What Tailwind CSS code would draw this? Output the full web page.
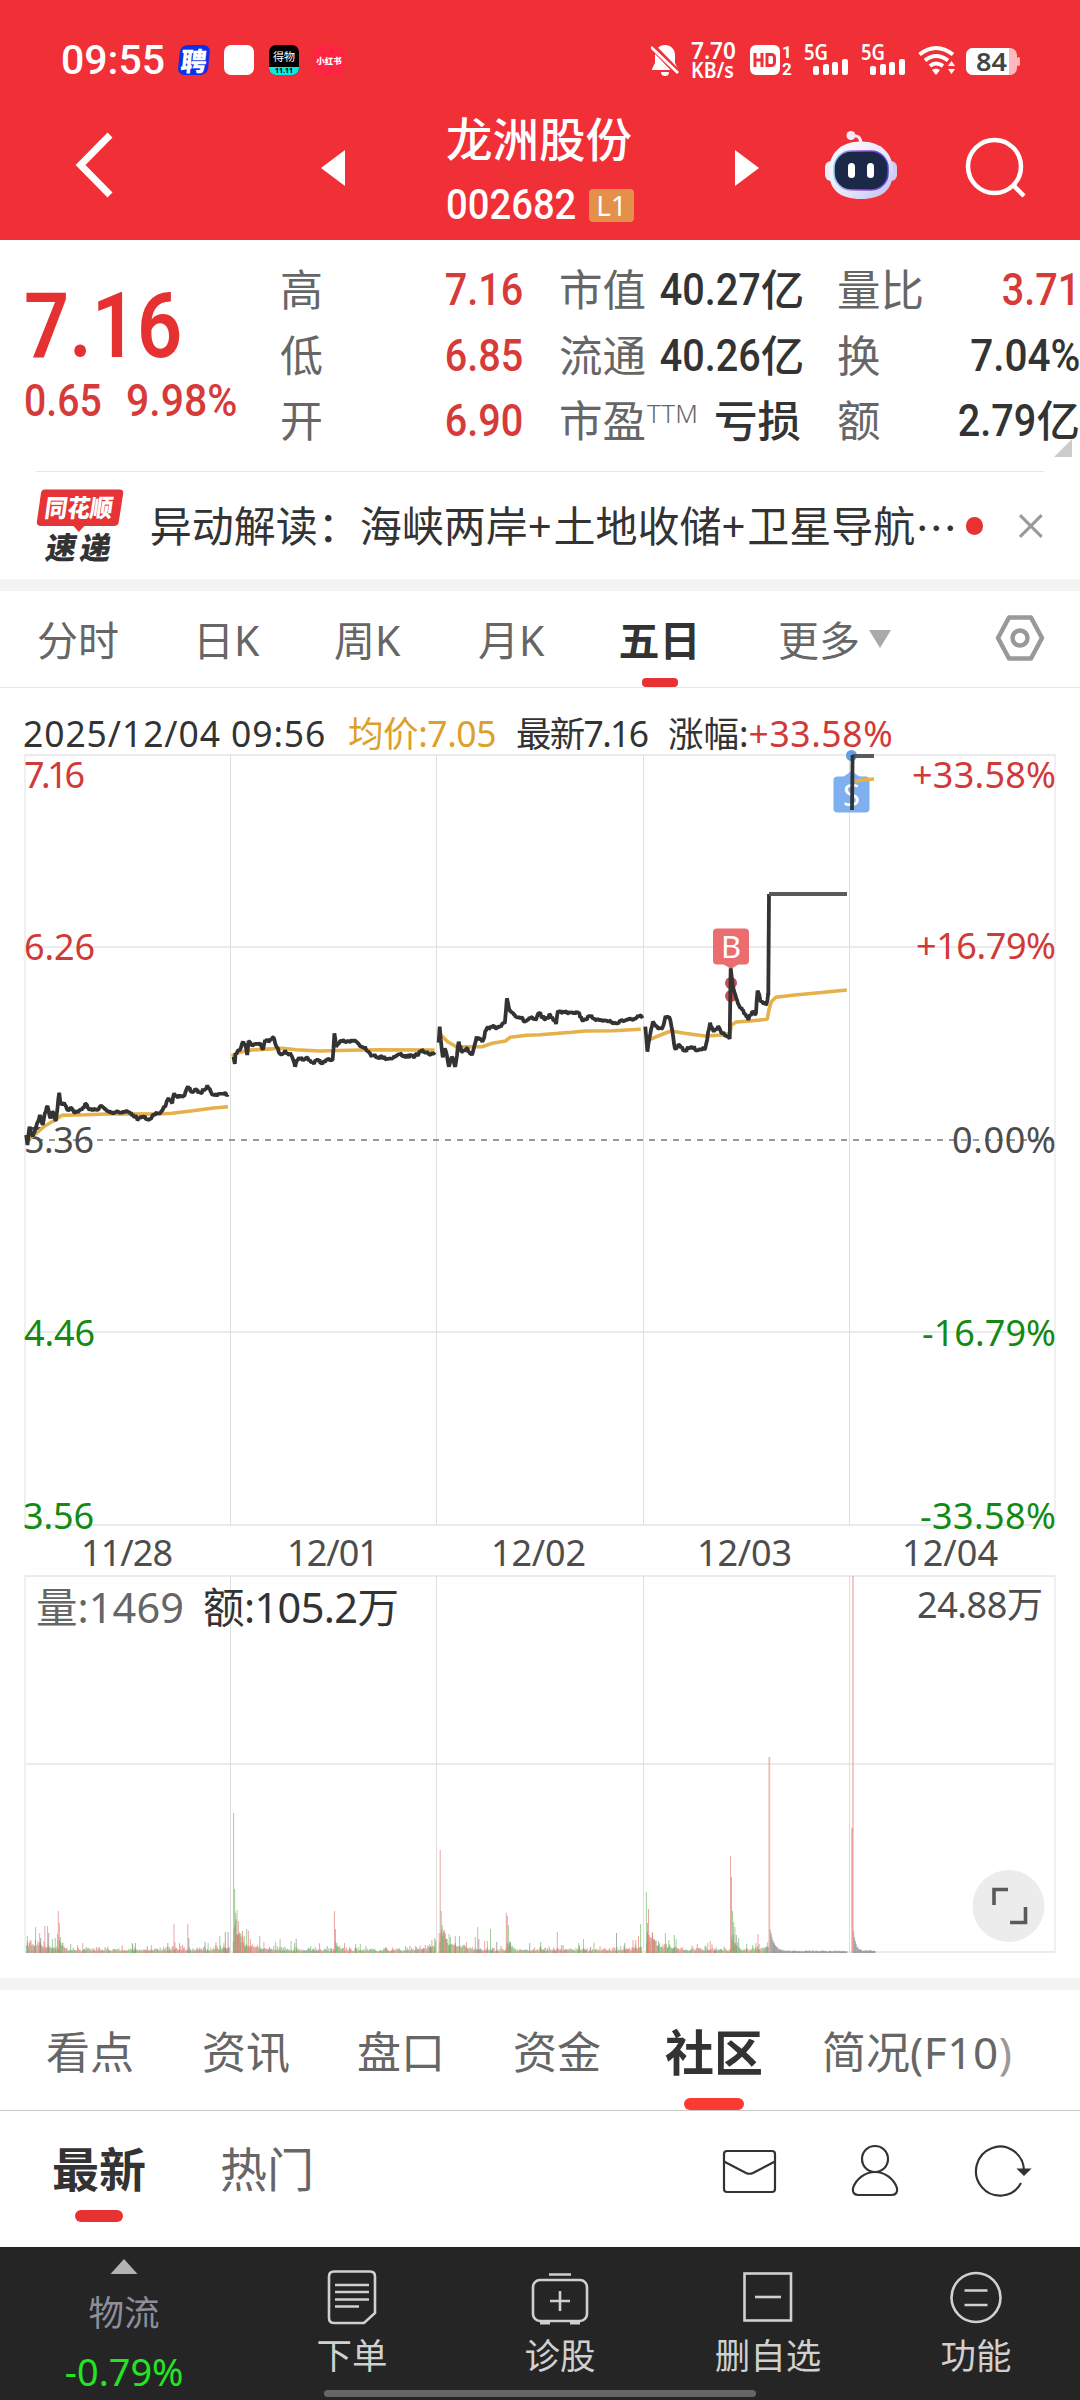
<!DOCTYPE html>
<html lang="zh-CN">
<head>
<meta charset="utf-8">
<title>龙洲股份 002682</title>
<script src="https://cdn.jsdelivr.net/npm/@tailwindcss/browser@4"></script>
</head>
<body class="w-[1080px] h-[2400px] overflow-hidden bg-white text-[#333] font-['Noto_Sans','Noto_Sans_CJK_SC',sans-serif]">
<div class="flex flex-col w-[1080px] h-[2400px] overflow-hidden whitespace-nowrap">

  <!-- Header -->
  <header class="h-[240px] bg-[#f12f37] text-white flex flex-col shrink-0">
    <!-- status bar -->
    <div class="h-[80px] pt-[40px] flex items-center shrink-0">
      <div class="ml-[61px] w-[118px] text-[41px] leading-[42px] font-medium font-['Roboto',sans-serif]">09:55</div>
      <div class="flex gap-[15px] w-[472px]">
        <div class="size-[30px] rounded-[7px] bg-[#0d2fe8] flex items-center justify-center text-[26px] leading-[30px] font-black -skew-x-6 font-['Noto_Sans_CJK_SC',sans-serif]">聘</div>
        <div class="size-[30px] rounded-[7px] bg-white"></div>
        <div class="size-[30px] rounded-[7px] bg-black overflow-hidden flex flex-col items-center">
          <div class="h-[22px] text-[11px] leading-[23px]">得物</div>
          <div class="h-[8px] w-full bg-[#0fe6e6] text-black text-[7px] leading-[8px] text-center font-bold">11.11</div>
        </div>
        <div class="size-[30px] rounded-[7px] bg-[#ff2442] flex items-center justify-center text-[8.5px] font-black font-['Noto_Sans_CJK_SC',sans-serif]">小红书</div>
      </div>
      <svg class="w-[28px] h-[32px]" viewBox="0 0 28 32" fill="white">
        <path d="M14 1c6 0 10 4.500 10 10v8l3 6v1H1v-1l3-6v-8C4 5.500 8 1 14 1z"/><path d="M10 28h8a4 4 0 0 1-8 0z"/>
        <path d="M-1 0L27 29" stroke="#f12f37" stroke-width="6.500"/><path d="M0 3L27 29" stroke="white" stroke-width="2.800"/>
      </svg>
      <div class="ml-[12px] w-[59px] flex flex-col font-semibold leading-[20px] text-[23px] font-['Noto_Sans',sans-serif]">
        <span class="origin-left scale-x-[.98]">7.70</span><span class="text-[21px] origin-left scale-x-[.93]">KB/s</span>
      </div>
      <svg class="w-[44px] h-[32px] overflow-visible font-['Roboto']" viewBox="0 0 44 32">
        <rect x="0" y="1" width="30" height="30" rx="6" fill="white"/>
        <path d="M5 9v14M12 9v14M5 16h7M17 10.500h4.500a3 3 0 0 1 3 3v5a3 3 0 0 1-3 3H17z" fill="none" stroke="#f12f37" stroke-width="3"/>
        <text x="32" y="13.500" font-size="17" font-weight="700" fill="white">1</text>
        <text x="32" y="31" font-size="17" font-weight="700" fill="white">2</text>
      </svg>
      <svg class="ml-[10px] w-[114px] h-[32px] overflow-visible" viewBox="0 0 114 32" fill="white">
        <g id="sig"><text x="0" y="16" font-size="21" font-weight="600" textLength="24" lengthAdjust="spacingAndGlyphs">5G</text>
        <rect x="9" y="22" width="6" height="9" rx="2"/><rect x="19" y="20" width="6" height="11" rx="2"/><rect x="28" y="18" width="6" height="13" rx="2"/><rect x="38" y="15" width="6" height="16" rx="2"/></g>
        <use href="#sig" x="57"/>
      </svg>
      <svg class="w-[38px] h-[32px]" viewBox="0 0 38 32" fill="none" stroke="white" stroke-width="4">
        <path d="M1.500 10.500Q18 -2.500 35 10.500M7 16.500Q18 7.500 30 16.500M12 22Q18 17 25 22"/>
        <path d="M14 26q4-3 8 0l-4 5z" fill="white" stroke="none"/><path d="M30 22l3.500-5 3.500 5zM30 25l3.500 5 3.500-5z" fill="white" stroke="none"/>
      </svg>
      <svg class="ml-[10px] w-[56px] h-[32px] overflow-visible font-['Noto_Sans']" viewBox="0 0 56 32">
        <rect x="0" y="4" width="51" height="27" rx="7" fill="#ffb8bb"/><path d="M7 4H43V31H7a7 7 0 0 1-7-7V11a7 7 0 0 1 7-7z" fill="white"/>
        <rect x="51" y="13" width="3" height="9" rx="1.500" fill="#ffb8bb"/>
        <text x="10" y="27" font-size="25" font-weight="600" fill="#444" textLength="31" lengthAdjust="spacingAndGlyphs">84</text>
      </svg>
    </div>
    <!-- title bar -->
    <div class="h-[160px] flex items-start">
      <svg class="ml-[72px] mt-[49px] w-[44px] h-[72px]" viewBox="0 0 44 72" fill="none" stroke="white" stroke-width="7"><path d="M38 6L8.500 36L38 66"/></svg>
      <svg class="ml-[205px] mt-[70px] w-[24px] h-[36px]" viewBox="0 0 24 36" fill="white"><path d="M24 0V36L0 18z"/></svg>
      <div class="ml-[101px] w-[193px] flex flex-col">
        <div class="mt-[29px] h-[60px] text-[46.500px] leading-[60px] font-medium">龙洲股份</div>
        <div class="mt-[15px] flex items-center h-[42px]">
          <div class="w-[143px] text-[42px] leading-[42px] font-medium font-['Roboto',sans-serif] origin-left scale-x-[.91]">002682</div>
          <div class="w-[45px] h-[33px] rounded-[4px] bg-[#e48f4a] text-[28px] leading-[33px] text-center">L1</div>
        </div>
      </div>
      <svg class="ml-[96px] mt-[70px] w-[24px] h-[36px]" viewBox="0 0 24 36" fill="white"><path d="M0 0V36L24 18z"/></svg>
      <svg class="ml-[65px] mt-[50px] w-[74px] h-[70px]" viewBox="0 0 74 70">
        <defs>
          <linearGradient id="hd" x1="0" y1="0" x2="1" y2="1"><stop offset="0" stop-color="#fff"/><stop offset=".6" stop-color="#e6e4fb"/><stop offset="1" stop-color="#b9bdf0"/></linearGradient>
          <linearGradient id="rim" x1="0" y1="0" x2="1" y2="0"><stop offset="0" stop-color="#8fd3f2"/><stop offset=".5" stop-color="#a34be0"/><stop offset="1" stop-color="#4b41d8"/></linearGradient>
        </defs>
        <path d="M27 6Q37 4 37 14" fill="none" stroke="#f3e6f7" stroke-width="3"/><circle cx="27" cy="5.500" r="4.500" fill="#f6e9f7"/>
        <rect x="1" y="31" width="12" height="20" rx="6" fill="#e9ecfb"/><rect x="61" y="31" width="12" height="20" rx="6" fill="#cfcdf5"/>
        <path d="M37 11.500C58 11.500 69 24 69 41C69 60 58 69 37 69S5 60 5 41C5 24 16 11.500 37 11.500z" fill="url(#hd)"/>
        <rect x="10" y="21" width="54" height="39" rx="17" fill="#1b2848" stroke="url(#rim)" stroke-width="1.500"/>
        <rect x="24" y="33" width="7" height="15" rx="3.500" fill="white"/><rect x="43" y="33" width="7" height="15" rx="3.500" fill="white"/>
      </svg>
      <svg class="ml-[66px] mt-[55px] w-[64px] h-[66px]" viewBox="0 0 64 66" fill="none" stroke="white" stroke-width="4.500"><circle cx="30.500" cy="31.500" r="26.500"/><path d="M49 50L60 61"/></svg>
    </div>
  </header>

  <!-- Quote -->
  <section class="h-[231px] flex shrink-0 pt-[17px] relative">
    <div class="w-[280px] pl-[24px] text-[#e63133] font-['Roboto',sans-serif]">
      <div class="mt-[23px] h-[92px] leading-[92px] text-[91px] font-semibold origin-left scale-x-[.87]">7.16</div>
      <div class="mt-[4px] h-[48px] flex text-[#d63a39] text-[45px] leading-[50px] font-medium">
        <div class="w-[102px] origin-left scale-x-[.87]">0.65</div><div class="origin-left scale-x-[.91]">9.98%</div>
      </div>
    </div>
    <div class="w-[243px] text-[43px] leading-[65.500px] text-[#666]">
      <div class="flex justify-between"><span>高</span><b class="font-medium text-[45px] text-[#d63a39] font-['Roboto',sans-serif] origin-right scale-x-[.88]">7.16</b></div>
      <div class="flex justify-between"><span>低</span><b class="font-medium text-[45px] text-[#d63a39] font-['Roboto',sans-serif] origin-right scale-x-[.88]">6.85</b></div>
      <div class="flex justify-between"><span>开</span><b class="font-medium text-[45px] text-[#d63a39] font-['Roboto',sans-serif] origin-right scale-x-[.88]">6.90</b></div>
    </div>
    <div class="ml-[36px] w-[242px] text-[43.500px] leading-[65.500px] text-[#666]">
      <div class="flex justify-between"><span>市值</span><b class="flex font-medium text-[#333]"><i class="not-italic text-[45px] font-['Roboto',sans-serif] origin-right scale-x-[.88]">40.27</i>亿</b></div>
      <div class="flex justify-between"><span>流通</span><b class="flex font-medium text-[#333]"><i class="not-italic text-[45px] font-['Roboto',sans-serif] origin-right scale-x-[.88]">40.26</i>亿</b></div>
      <div class="flex justify-between"><span class="flex">市盈<i class="not-italic text-[26px] leading-[50px] ml-px font-light">TTM</i></span><b class="font-medium text-[#333]">亏损</b></div>
    </div>
    <div class="ml-[36px] w-[243px] shrink-0 text-[43.500px] leading-[65.500px] text-[#666]">
      <div class="flex justify-between"><span>量比</span><b class="font-medium text-[45px] text-[#d63a39] font-['Roboto',sans-serif] origin-right scale-x-[.88]">3.71</b></div>
      <div class="flex justify-between"><span>换</span><b class="font-medium text-[45px] text-[#333] font-['Roboto',sans-serif] origin-right scale-x-[.9]">7.04%</b></div>
      <div class="flex justify-between"><span>额</span><b class="flex font-medium text-[#333]"><i class="not-italic text-[45px] font-['Roboto',sans-serif] origin-right scale-x-[.88]">2.79</i>亿</b></div>
    </div>
    <svg class="absolute right-[8px] top-[199px] w-[18px] h-[18px]" viewBox="0 0 18 18" fill="#ccc"><path d="M18 0V18H0z"/></svg>
  </section>

  <!-- News strip -->
  <section class="h-[108px] mx-[36px] border-t border-[#e8e8e8] flex items-center shrink-0">
    <svg class="w-[92px] h-[76px] font-['Noto_Sans_CJK_SC']" viewBox="0 0 92 76">
      <path d="M9 1H85q4 0 3.500 4L84 34q-.5 4-5 4H49l-5.500 6L38 38H5q-5 0-4-5L5 5q.5-4 4-4z" fill="#e63336"/>
      <text x="7" y="29" transform="skewX(-8) translate(5 0)" font-size="25" font-weight="900" fill="white" textLength="69" lengthAdjust="spacingAndGlyphs">同花顺</text>
      <text x="9" y="71" transform="skewX(-10) translate(12 0)" font-size="31" font-weight="900" fill="#333" textLength="66">速递</text>
    </svg>
    <div class="ml-[23px] w-[808px] text-[42px] leading-[60px] flex"><span>异动解读：海峡两岸</span><span class="w-[28px]">+</span><span>土地收储</span><span class="w-[28px]">+</span><span>卫星导航</span><span class="w-[46px] font-['Noto_Sans_CJK_SC']">⋯</span></div>
    <div class="ml-[8px] size-[18px] rounded-full bg-[#e83133]"></div>
    <svg class="ml-[35px] w-[26px] h-[26px]" viewBox="0 0 26 26" stroke="#999" stroke-width="3"><path d="M2 2L24 24M24 2L2 24"/></svg>
  </section>
  <div class="h-[12px] bg-[#f4f4f4] shrink-0"></div>

  <!-- Period tabs -->
  <nav class="h-[97px] border-b border-[#e6e6e6] flex shrink-0 text-[41px] leading-[99px] text-[#666]">
    <div class="ml-[37px] w-[156px]">分时</div>
    <div class="w-[141px]">日K</div>
    <div class="w-[144px]">周K</div>
    <div class="w-[141px]">月K</div>
    <div class="w-[81px] text-[#333] font-semibold flex flex-col items-center">
      <div class="h-[87px]">五日</div><div class="w-[36px] h-[9px] rounded-[4px] bg-[#e83133]"></div>
    </div>
    <div class="ml-[78px] w-[90px]">更多</div>
    <svg class="mt-[39px] w-[24px] h-[19px]" viewBox="0 0 24 19" fill="#aaa"><path d="M1 0H23L12 18z"/></svg>
    <svg class="ml-[103px] mt-[22px] w-[50px] h-[50px]" viewBox="0 0 50 50" fill="none" stroke="#999" stroke-width="4.500" stroke-linejoin="round"><path d="M14 4.500H36L47 25L36 45.500H14L3 25z"/><circle cx="25" cy="25" r="7.500"/></svg>
  </nav>

  <!-- Chart legend -->
  <div class="h-[64px] shrink-0 pl-[23px] pt-[13px] flex text-[35.500px] leading-[64px]">
    <div class="w-[325px] tracking-[.9px]">2025/12/04 09:56</div>
    <div class="w-[168px] text-[#dda029] tracking-[-.4px]">均价:7.05</div>
    <div class="w-[152px] tracking-[-1.700px]">最新7.16</div>
    <div>涨幅:<span class="text-[#d03a38] tracking-[.6px]">+33.58%</span></div>
  </div>

  <!-- Charts: coordinates start at page y = 740 -->
  <svg id="chart" class="shrink-0 w-[1080px] h-[1238px] -mt-[12px]" viewBox="0 740 1080 1238">
    <g stroke="#ebebeb" stroke-width="2">
      <path d="M25 755H1055M25 947H1055M25 1332H1055M25 1525H1055M25 1576H1055M25 1764H1055M25 1952H1055"/>
      <path d="M25 754V1526M1055 754V1526M25 1575V1953M1055 1575V1953" stroke-width="1.500"/>
    </g>
    <path d="M230.500 755V1525M436.500 755V1525M643.500 755V1525M849.500 755V1525M230.500 1576V1952M436.500 1576V1952M643.500 1576V1952M849.500 1576V1952" stroke="#dedede"/>
    <path d="M25 1140H1055" stroke="#999" stroke-width="2" stroke-dasharray="6 6"/>
    <g id="volume"></g>
    <g font-size="36" fill="#d03a38">
      <text x="24" y="788" textLength="61">7.16</text><text x="24" y="960" textLength="71">6.26</text>
      <text x="24" y="1153" fill="#4d4d4d" textLength="70">5.36</text>
      <text x="24" y="1346" fill="#138a13" textLength="71">4.46</text><text x="23" y="1528.500" fill="#138a13" textLength="71">3.56</text>
      <text x="912" y="788" textLength="144">+33.58%</text><text x="916" y="959" textLength="140">+16.79%</text>
      <text x="952" y="1153" fill="#4d4d4d" textLength="104">0.00%</text>
      <text x="922" y="1346" fill="#138a13" textLength="134">-16.79%</text><text x="920" y="1528.500" fill="#138a13" textLength="136">-33.58%</text>
    </g>
    <g font-size="36" fill="#4d4d4d">
      <text x="81" y="1566" textLength="92">11/28</text><text x="287" y="1566" textLength="92">12/01</text><text x="491" y="1566" textLength="95">12/02</text><text x="697" y="1566" textLength="95">12/03</text><text x="902" y="1566" textLength="96">12/04</text>
      <text x="917" y="1617.500" textLength="126">24.88万</text>
      <text x="36" y="1623" font-size="41.500" fill="#666" textLength="148">量:1469</text><text x="203" y="1623" font-size="41.500" fill="#333" textLength="196">额:105.2万</text>
    </g>
    <g fill="#7eb0f0"><rect x="833.500" y="776.500" width="36" height="36" rx="4"/><path d="M843 777l8.500-6 8.500 6z"/><circle cx="851.500" cy="755.500" r="5.500" fill="#5c9fe8"/></g>
    <text x="851.500" y="806" font-size="31" fill="white" text-anchor="middle">S</text>
    <g fill="#ec6d6f"><rect x="713" y="928.500" width="36" height="36" rx="4"/><path d="M723 964l8 5 8-5z"/><circle cx="731" cy="983" r="6" fill="#c65058"/><circle cx="731" cy="996" r="6" fill="#c65058"/></g>
    <text x="731" y="958" font-size="31" fill="white" text-anchor="middle">B</text>
    <g id="price" fill="none" stroke-linejoin="bevel"></g>
    <circle cx="1008.500" cy="1906" r="36" fill="#ececec"/>
    <path d="M1008 1889.500H994V1905M1010 1922.500H1025.500V1907" fill="none" stroke="#5a5a5a" stroke-width="3.600"/>
  </svg>
  <div class="h-[12px] bg-[#f4f4f4] shrink-0"></div>

  <!-- Section tabs -->
  <nav class="h-[121px] border-b border-[#c8c8c8] flex shrink-0 text-[44px] leading-[124px] text-[#666]">
    <div class="ml-[46px] w-[156px]">看点</div>
    <div class="w-[155px]">资讯</div>
    <div class="w-[156px]">盘口</div>
    <div class="w-[152px]">资金</div>
    <div class="w-[98px] text-[49px] font-semibold text-[#333] flex flex-col items-center">
      <div class="h-[108px]">社区</div><div class="w-[60px] h-[12px] rounded-[6px] bg-[#fa3b33]"></div>
    </div>
    <div class="ml-[59px]">简况<span class="tracking-[.6px]">(F10<span class="text-[#999]">)</span></span></div>
  </nav>

  <!-- Sort row -->
  <section class="h-[136px] flex shrink-0 text-[47px] leading-[117px] text-[#666]">
    <div class="ml-[52px] w-[94px] flex flex-col items-center">
      <div class="h-[99px] font-bold text-[#333]">最新</div><div class="w-[48px] h-[12px] rounded-[6px] bg-[#e83133]"></div>
    </div>
    <div class="ml-[74px] w-[500px]">热门</div>
    <svg class="mt-[36px] w-[58px] h-[50px]" viewBox="0 0 58 50" fill="none" stroke="#333" stroke-width="2.200"><rect x="4" y="4" width="51" height="41" rx="3"/><path d="M4 14.500L26 26q3.500 1.500 7 0L55 14.500"/></svg>
    <svg class="ml-[71px] mt-[32px] w-[52px] h-[56px]" viewBox="0 0 52 56" fill="none" stroke="#333" stroke-width="2.200"><ellipse cx="26" cy="16" rx="13" ry="13"/><path d="M26 29C36 29 45 36 48 45Q49 51.500 43 52H9Q3 51.500 4 45C7 36 16 29 26 29z"/></svg>
    <svg class="ml-[73px] mt-[32px] w-[60px] h-[56px]" viewBox="0 0 60 56" fill="none" stroke="#333" stroke-width="2.200"><path d="M50 28A24 24.500 0 1 0 47 40"/><path d="M45 26.500H55L50 31.500z" fill="#333"/></svg>
  </section>

  <!-- Bottom bar -->
  <footer class="relative h-[153px] bg-[#252525] flex shrink-0 text-[36px] text-[#d0d0d0]">
    <div class="w-[248px] flex flex-col items-center">
      <svg class="mt-[12px] w-[28px] h-[15px]" viewBox="0 0 28 15" fill="#b3b3b3"><path d="M14 0L27.500 15H.5z"/></svg>
      <div class="mt-[14px] h-[48px] leading-[48px] text-[35.500px] text-[#8e8e99]">物流</div>
      <div class="mt-[11px] h-[48px] leading-[48px] text-[39px] text-[#23e623] scale-x-[.97]">-0.79%</div>
    </div>
    <div class="w-[208px] flex flex-col items-center">
      <svg class="mt-[22px] w-[52px] h-[56px]" viewBox="0 0 52 56" fill="none" stroke="#d0d0d0" stroke-width="2.600"><path d="M8 2.500H44q5 0 5 5V44L38 54H8q-5 0-5-5V7.500q0-5 5-5z"/><path d="M9 16H43M9 23H43M9 30.500H43M9 37.500H33"/></svg>
      <div class="mt-[6px] h-[48px] leading-[48px] text-[35.500px]">下单</div>
    </div>
    <div class="w-[208px] flex flex-col items-center">
      <svg class="mt-[22px] w-[60px] h-[56px]" viewBox="0 0 60 56" fill="none" stroke="#d0d0d0" stroke-width="2.600"><rect x="3" y="11" width="54" height="41" rx="7"/><path d="M19 5.500H41M20 32H40M30 22V42"/><path d="M10 54H20M40 54H50" stroke-width="3"/></svg>
      <div class="mt-[6px] h-[48px] leading-[48px] text-[35.500px]">诊股</div>
    </div>
    <div class="w-[208px] flex flex-col items-center">
      <svg class="mt-[22px] w-[52px] h-[56px]" viewBox="0 0 52 56" fill="none" stroke="#d0d0d0" stroke-width="2.600"><rect x="2.500" y="4.500" width="46.500" height="47"/><path d="M13 28H39"/></svg>
      <div class="mt-[6px] h-[48px] leading-[48px] text-[35.500px]">删自选</div>
    </div>
    <div class="w-[208px] flex flex-col items-center">
      <svg class="mt-[22px] w-[52px] h-[56px]" viewBox="0 0 52 56" fill="none" stroke="#d0d0d0" stroke-width="2.600"><circle cx="26" cy="28.500" r="24.500"/><path d="M14.500 21.500H37.500M14.500 36H37.500"/></svg>
      <div class="mt-[6px] h-[48px] leading-[48px] text-[35.500px]">功能</div>
    </div>
    <div class="absolute left-[324px] top-[143px] w-[432px] h-[7px] rounded-full bg-[#666]"></div>
  </footer>
</div>

<script>
// Key points of each trading day in chart units; X/Y map them to svg coordinates.
const X = x => x / 2.904, Y = y => 940 + y / 3;
let seed = 7;
const rnd = () => (seed = (seed * 16807) % 2147483647) / 2147483647;
const NS = 'http://www.w3.org/2000/svg';
const add = (parent, tag, attrs) => {
  const e = document.createElementNS(NS, tag);
  for (const k in attrs) e.setAttribute(k, attrs[k]);
  document.getElementById(parent).appendChild(e);
};
const P = s => s.split(' ').map(p => p.split(',').map(Number));
const days = [
  ['76,585 80,615 86,560 95,590 105,560 116,525 124,555 130,520 138,498 146,535 152,515 162,543 172,458 176,492 186,488 198,510 205,502 214,515 226,518 250,492 258,508 280,510 292,498 310,512 326,518 340,514 356,517 375,514 388,530 402,537 415,530 436,536 450,525 466,518 478,500 490,474 500,490 506,460 515,470 536,466 546,440 556,455 570,450 582,460 602,436 612,455 622,467 640,460 661,463',
   '80,600 100,585 130,558 160,540 180,526 250,524 330,521 460,522 500,520 560,512 620,504 662,500'],
  ['678,350 682,372 684,340 692,330 700,322 706,305 712,315 718,345 722,303 735,315 755,310 764,328 770,300 780,305 794,292 802,318 812,340 830,336 845,345 857,380 868,352 880,362 892,353 912,372 922,356 936,372 950,360 966,360 971,280 976,320 985,310 1000,303 1022,300 1035,305 1050,320 1060,320 1072,338 1085,348 1110,352 1132,356 1150,348 1165,342 1180,350 1205,348 1228,332 1245,342 1263,337',
   '673,348 690,338 730,330 820,325 860,329 930,333 1010,331 1100,329 1262,330'],
  ['1274,308 1277,260 1280,300 1286,352 1292,325 1304,380 1312,350 1322,380 1332,305 1340,335 1355,325 1370,345 1384,290 1400,305 1412,270 1425,258 1440,265 1455,260 1466,250 1472,175 1480,210 1495,225 1510,232 1525,245 1540,235 1555,240 1566,220 1583,238 1598,225 1615,252 1620,212 1640,217 1660,215 1680,217 1690,240 1715,230 1740,240 1765,243 1790,250 1815,240 1840,240 1858,226 1866,235',
   '1280,285 1300,305 1325,320 1400,320 1430,310 1468,303 1482,292 1530,286 1568,284 1660,277 1700,273 1780,272 1861,268'],
  ['1874,260 1880,335 1886,295 1896,245 1913,265 1923,265 1933,228 1943,230 1950,260 1960,325 1973,315 1988,332 2008,320 2028,330 2048,325 2062,248 2073,275 2088,262 2098,280 2119,297 2122,85 2128,140 2143,190 2158,210 2173,240 2183,218 2195,222 2200,152 2210,185 2226,192 2231,160',
   '1888,298 1918,285 1948,273 1988,280 2048,288 2098,285 2120,280 2124,255 2138,246 2178,243 2228,238 2233,210 2240,185 2253,172 2308,165 2378,158 2459,150'],
  [null, '2482,-476 2508,-480 2538,-483']
];
const path = (pts, amp, step) => {
  let d = '';
  pts.forEach(([x, y], i) => {
    d += (i ? 'L' : 'M') + X(x).toFixed(1) + ' ' + Y(y).toFixed(1);
    const n = pts[i + 1];
    if (!n || !amp) return;
    const k = Math.floor((n[0] - x) / step);
    for (let j = 1; j < k; j++) {
      const t = j / k;
      d += 'L' + X(x + (n[0] - x) * t).toFixed(1) + ' ' + (Y(y + (n[1] - y) * t) + (rnd() - .5) * amp).toFixed(1);
    }
  });
  return d;
};
for (const [p, a] of days) {
  add('price', 'path', { d: path(P(a), 0), stroke: '#e6b04a', 'stroke-width': 3.6 });
  if (p) add('price', 'path', { d: path(P(p), 3.6, 2.5), stroke: '#333', 'stroke-width': 3.8 });
}
add('price', 'path', { d: 'M768.3 995L769 894', stroke: '#333', 'stroke-width': 3.8 });
add('price', 'path', { d: 'M769 894H847M852.500 756H874', stroke: '#5a5a5a', 'stroke-width': 3.8 });
add('price', 'path', { d: 'M852 810L852.600 755', stroke: '#333', 'stroke-width': 3.8 });

// Volume: [x, height, colour] spikes over a low random base.
const C = { r: '#e0736d', g: '#66b15b', k: '#777777' };
const bar = (x, h, c, w = 1) => add('volume', 'rect', { x: x.toFixed(1), y: (1953 - h).toFixed(1), width: w, height: h.toFixed(1), fill: C[c], opacity: .62 });
const spikes = [
  '79,17,g 103,26,r 115,20,r 118,15,k 130,27,r 138,27,r 141,20,k 152,14,g 160,15,g 167,19,r 169,42,r 172,30,r 175,16,g 180,10,g 240,10,r 250,6,g 288,6,r 384,10,g 393,10,k 440,8,r 487,10,k 505,29,r 508,11,r 521,10,r 545,29,r 548,15,k 595,11,k 604,10,g 627,11,r 638,17,g 650,10,r 654,21,k 662,21,k',
  '678,140,r 681,64,g 684,40,r 688,43,g 692,32,r 696,19,r 699,20,g 704,22,r 709,17,g 716,24,g 721,22,r 727,14,r 754,17,r 766,11,r 800,11,g 813,14,g 845,12,g 855,10,g 860,14,k 902,7,g 971,42,r 974,24,g 978,10,g 1000,10,r 1033,9,g 1046,9,g 1120,6,g 1206,7,r 1248,9,r 1254,13,r 1262,15,g',
  '1275,20,r 1278,103,r 1281,42,g 1284,28,g 1288,20,r 1292,19,r 1297,14,r 1304,19,g 1308,16,g 1322,17,g 1334,17,r 1354,11,r 1380,16,r 1387,26,r 1390,14,k 1407,12,r 1415,12,r 1424,24,g 1442,11,k 1470,40,r 1473,37,r 1476,28,g 1480,12,g 1538,10,k 1570,11,g 1618,21,r 1630,8,r 1680,10,g 1694,14,g 1790,20,k 1814,10,k 1838,13,r 1846,13,r 1854,17,r 1860,29,g',
  '1877,61,g 1880,30,g 1883,44,r 1887,16,r 1894,20,r 1900,14,r 1912,12,g 1932,20,g 1942,13,g 1958,18,g 1963,14,g 2055,10,r 2062,12,r 2121,97,r 2124,76,g 2127,42,g 2130,31,g 2134,26,g 2138,18,k 2145,15,g 2168,9,g 2195,10,r 2201,19,r 2204,9,g 2229,11,r',
];
const bounds = [[76, 664], [676, 1264], [1276, 1862], [1876, 2232]];
bounds.forEach(([a, b], d) => {
  const list = spikes[d].split(' ').map(s => s.split(','));
  for (let x = a; x < b; x += 2.5) {
    const near = list.reduce((m, s) => { const dx = x - s[0]; return dx > 0 && dx < 26 && s[1] > 38 ? Math.max(m, s[1] * .2 * (1 - dx / 26)) : m; }, 0);
    const open = Math.max(0, 10 * (1 - (x - a) / 110)), tail = Math.max(0, 4 * (1 - (b - x) / 60));
    const h = 1.6 + rnd() * 2 + rnd() * rnd() * rnd() * 8 + (open + tail + near) * (.45 + rnd() * .55);
    bar(X(x), h, 'rgrgk'[Math.floor(rnd() * 5)], 1.1);
  }
  list.forEach(([x, h, c]) => bar(X(+x) - .4, +h, c));
});
for (let x = 2235; x < 2458; x += 2.5) bar(X(x), 1.4 + 22 * Math.exp((2235 - x) / 11) + rnd() * 1.2, 'k', 1.1);
for (let x = 2477; x < 2540; x += 2.5) bar(X(x), 1.4 + 20 * Math.exp((2477 - x) / 7) + rnd() * 1.5, 'k', 1.1);
add('volume', 'rect', { x: 768.4, y: 1757, width: 1.8, height: 196, fill: '#e79a92', opacity: .65 });
add('volume', 'rect', { x: 852, y: 1576, width: 1.9, height: 377, fill: '#e9a19c', opacity: .6 });
add('volume', 'rect', { x: 851.3, y: 1828, width: 1.5, height: 125, fill: '#df736f', opacity: .6 });
</script>
</body>
</html>
